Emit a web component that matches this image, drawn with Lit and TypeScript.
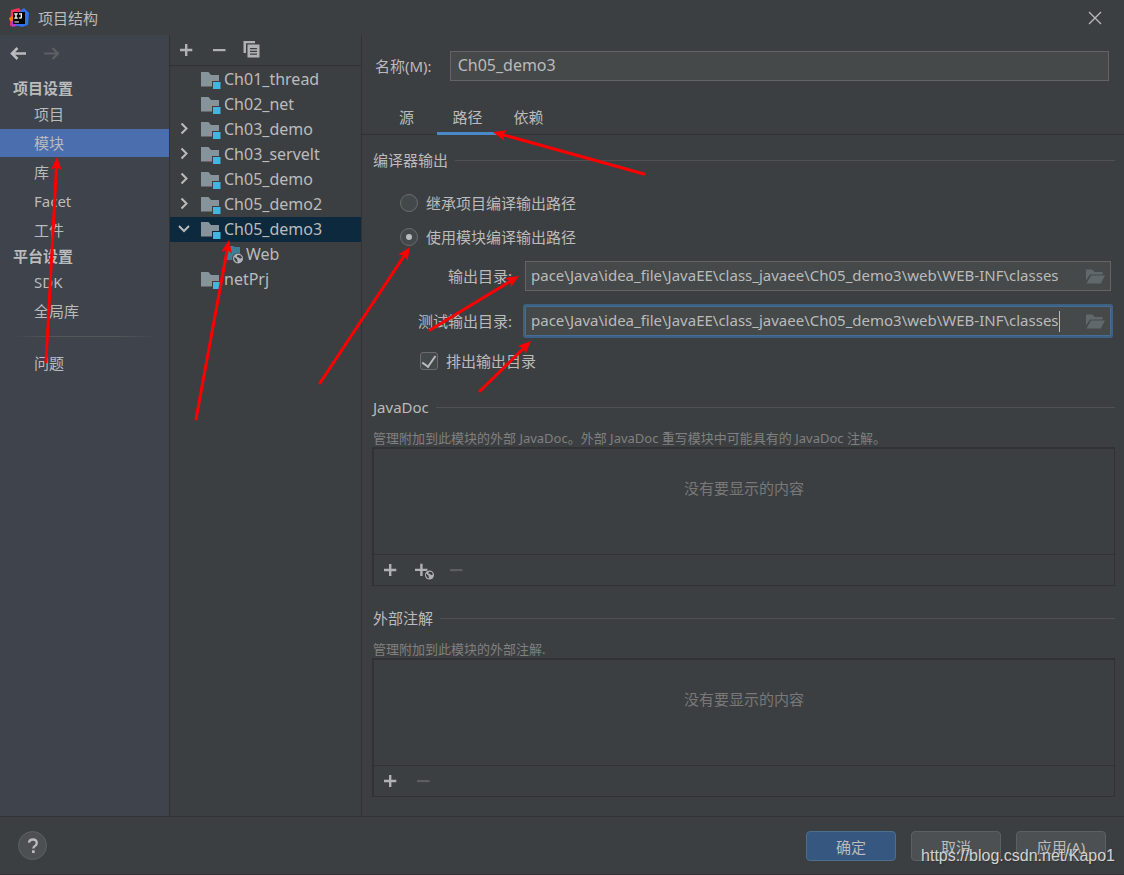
import { LitElement, html, css, svg, nothing } from "lit";
import { customElement, property, state } from "lit/decorators.js";

const icons = {
  plus: svg`<path d="M7 4h2.400v4.800h4.900v2.400H9.400V16H7v-4.800H2V8.800h5z"/>`,
  minus: svg`<path d="M2 9h12.500v2.200H2z"/>`,
  copy: svg`<path d="M-0.500 1H11v2.300H2V13h-2.500z"/><path fill-rule="evenodd" d="M3.500 4.500h12V17.500h-12zM6 8v1.300h7V8zm0 2.700V12h7v-1.300zm0 2.700v1.300h7v-1.300z"/>`,
  back: svg`<path d="M18 9.500H4M9.500 4 4 9.500l5.500 5.500" fill="none" stroke="currentColor" stroke-width="2.600"/>`,
  forward: svg`<path d="M2 9.500h14M10.500 4 16 9.500l-5.500 5.500" fill="none" stroke="currentColor" stroke-width="2.200"/>`,
  right: svg`<path d="M6.500 4.500 11.500 9.500 6.500 14.500" fill="none" stroke="currentColor" stroke-width="2"/>`,
  down: svg`<path d="M4 7 9 12 14 7" fill="none" stroke="currentColor" stroke-width="2"/>`,
  folder: svg`<path fill="#87939a" d="M0 3h7.500l2.500 3h8v6h-7V17.500H0z"/><path fill="#40b6e0" d="M12 13h7.500v7H12z"/>`,
  web: svg`<path fill="#3d7f99" d="M0 2h7l2 1h5v7H9v6H0z"/><circle cx="12" cy="14.500" r="5.800" fill="#3c3f41"/><circle cx="12" cy="14.500" r="5" fill="#afb5b9"/><path fill="#3c3f41" d="M8.500 13l2.500 2 .8 3.300-1.700-.5-2-2.600zM11.500 11l3 .3 1.600 2.400-2.200 1.100-1.100-1.400-2.100-.4z"/>`,
  open: svg`<path d="M1 3.500H7.500l2 2.500H17.500V8.500H5L1 14.500z"/><path d="M6 9.500h14l-4.200 8H1.500z"/>`,
  close: svg`<path d="M4 4l12 12M16 4 4 16" fill="none" stroke="currentColor" stroke-width="1.300"/>`,
  plusWeb: svg`<path d="M5.200 3.800h2.400v4.900h4.900v2.300H7.600v5H5.200v-5H0V8.700h5.200z"/><circle cx="14.500" cy="15" r="5.300" fill="#3c3f41"/><circle cx="14.500" cy="15" r="4.500"/><path fill="#3c3f41" d="M11 13.500l2.500 2 .6 3-1.500-.5-1.600-2.200zM14 11.800l2.700.3 1.400 2.200-2 1-1-1.300-1.900-.4z"/>`,
  logo: svg`<path fill="#fe315d" d="M2 2 10 0l3 4-4 12-8 2z"/><path fill="#f97a12" d="M0 10l4-2 3 6-6-1z"/><path fill="#b53bd0" d="M2 13l7-2 3 6-9 2z"/><path fill="#3170ee" d="M11 3 15 0l5 5-1 12-6 2-7-2z"/><path fill="#000" d="M4 4h12v12H4z"/><path fill="#fff" d="M5.200 5.300h3.600v1.200H7.700v3h1.100v1.200H5.200V9.500h1.100v-3H5.200zM10 5.300h3v4q0 1.500-1.700 1.500-1.200 0-1.800-.7l.8-.9q.4.400.8.400.6 0 .6-.8V6.500H10zM5.500 13.500h4.500v1H5.500z"/>`,
  help: svg`<path d="M6 6.700Q6.400 3.500 10 3.500T13.800 7q0 1.600-1.600 2.700Q10.400 10.800 10.300 12.500" fill="none" stroke="currentColor" stroke-width="2.300"/><path d="M9 14.300h2.700V17H9z"/>`,
};

type IconName = keyof typeof icons;

@customElement("ide-icon")
class IdeIcon extends LitElement {
  @property() name: IconName = "plus";

  static styles = css`
    :host { display: block; flex: none; width: 20px; height: 20px; }
    svg { display: block; width: 20px; height: 20px; fill: currentColor; overflow: visible; }
  `;

  render() {
    return html`<svg viewBox="0 0 20 20" aria-hidden="true">${icons[this.name]}</svg>`;
  }
}

interface Node { name: string; kind?: "closed" | "open"; child?: boolean; }

const nodes: Node[] = [
  { name: "Ch01_thread" },
  { name: "Ch02_net" },
  { name: "Ch03_demo", kind: "closed" },
  { name: "Ch03_servelt", kind: "closed" },
  { name: "Ch05_demo", kind: "closed" },
  { name: "Ch05_demo2", kind: "closed" },
  { name: "Ch05_demo3", kind: "open" },
  { name: "Web", child: true },
  { name: "netPrj" },
];

const outputPath = "pace\\Java\\idea_file\\JavaEE\\class_javaee\\Ch05_demo3\\web\\WEB-INF\\classes";

const arrows = [
  [46, 362, 57, 157],
  [196, 419, 229, 240],
  [320, 383, 410, 247],
  [430, 330, 519, 276],
  [480, 391, 531, 341],
  [644, 174, 493, 132],
];

@customElement("app-root")
class AppRoot extends LitElement {
  @state() page = "模块";
  @state() module = "Ch05_demo3";
  @state() tab = "路径";

  static styles = css`
    :host {
      display: flex; flex-direction: column; position: relative;
      min-height: 100vh; box-sizing: border-box; overflow: hidden;
      background: #3c3f41; color: #bbbbbb;
      border-bottom: 1px solid #323232;
      font: 15px/20px "Noto Sans", "Noto Sans CJK SC", sans-serif;
    }
    * { box-sizing: border-box; }
    button, input { font: inherit; color: inherit; margin: 0; }
    button { border: 0; background: none; padding: 0; text-align: left; }
    .title { display: flex; align-items: center; gap: 9px; height: 35px; padding: 0 19px 0 9px; }
    .title h1 { flex: 1; margin: 0; font-size: 15px; font-weight: 400; }
    .body { display: flex; flex: 1; }
    .side { width: 170px; background: #3e434c; border-right: 1px solid #323232; }
    .history { display: flex; gap: 14px; padding: 8px 8px 12px; height: 42px; }
    .dim { color: #5c6063; }
    .group { margin: 0; padding-left: 13px; font-size: 15px; line-height: 23px; font-weight: 700; }
    .item { display: block; width: 100%; height: 28px; margin-bottom: 1px; padding: 0 0 1px 34px; }
    .item.on { background: #4b6eaf; }
    .rule { height: 1px; margin: 11px 10px 12px; background: linear-gradient(90deg, transparent, #55575a 30%, #55575a 70%, transparent); }
    .tree { width: 192px; border-right: 1px solid #323232; }
    .tools { display: flex; align-items: center; gap: 13px; height: 31px; padding-left: 8px; border-bottom: 1px solid #323232; margin-bottom: 1px; }
    .tools ide-icon, .panel-tools ide-icon { color: #afb1b3; }
    .node { display: flex; align-items: center; width: 100%; height: 25px; padding: 0 0 1px 5px; font-size: 16px; }
    .node.on { background: #0d293e; }
    .node .twist { width: 20px; margin-right: 6px; }
    .node .pic { margin-right: 3px; }
    .node.child { padding-left: 30px; }
    .node.child .pic { margin-right: 0; }
    .main { flex: 1; min-width: 0; }
    .name { display: flex; align-items: center; padding: 16px 15px 0 13px; gap: 18px; }
    .box { display: flex; flex: 1; align-items: center; min-width: 0; height: 30px; background: #45494a; border: 1px solid #646464; padding: 0 5px; }
    .box input { flex: 1; min-width: 0; height: 28px; padding: 0 0 2px; border: 0; background: none; outline: 0; }
    .name .box { padding: 0 7px; }
    .name .box input { font-size: 16px; }
    .box .path { flex: 0 1 auto; field-sizing: content; }
    .box.focus { border-color: #466d94; box-shadow: 0 0 0 2px #3d6185; border-radius: 1px; }
    .caret { width: 1px; height: 21px; }
    .focus .caret { background: #bbbbbb; }
    .browse { color: #60686c; margin-left: auto; }
    .tabs { display: flex; height: 54px; padding: 19px 0 0 14px; border-bottom: 1px solid #323232; }
    .tab { width: 61px; text-align: center; padding: 2px 0 3px; height: 35px; }
    .tab.on { border-bottom: 3px solid #4a88c7; padding-bottom: 0; }
    .content { padding: 14px 9px 0 11px; }
    .legend { display: flex; align-items: center; gap: 7px; margin: 0; font-size: 15px; font-weight: 400; line-height: 22px; }
    .legend::after { content: ""; flex: 1; height: 1px; background: #515151; }
    .options { padding: 15px 4px 18px 27px; }
    .choice { display: flex; align-items: center; gap: 8px; height: 34px; }
    .choice input { appearance: none; width: 18px; height: 18px; border: 1px solid #6b6b6b; background: #43494a; display: grid; place-items: center; }
    .choice input[type="radio"] { border-radius: 50%; }
    .choice input[type="radio"]:checked::after { content: ""; width: 6px; height: 6px; border-radius: 50%; background: #bbbbbb; }
    .choice input[type="checkbox"] { border-radius: 3px; }
    .choice input[type="checkbox"]:checked::after { content: ""; width: 6px; height: 12px; border: solid #bbbbbb; border-width: 0 2px 2px 0; transform: rotate(35deg); margin-bottom: 3px; }
    .fields { display: grid; grid-template-columns: auto 1fr; align-items: center; gap: 15px 13px; padding: 7px 0 8px 18px; }
    .fields label { text-align: right; }
    .exclude { margin-left: 20px; }
    .note { margin: 11px 0 0; font-size: 13px; line-height: 18px; color: #808080; }
    .panel { border: 1px solid #323232; border-left-width: 2px; border-top-width: 2px; margin: 0 0 21px -1px; }
    .panel:last-child { margin-bottom: 16px; }
    .empty { height: 105px; padding-top: 29px; text-align: center; color: #787878; }
    .panel-tools { display: flex; gap: 13px; align-items: center; height: 31px; padding-left: 8px; border-top: 1px solid #323232; }
    .panel-tools .dim ide-icon { color: #5c5e60; }
    .foot { display: flex; align-items: center; gap: 15px; height: 58px; padding: 0 18px; border-top: 1px solid #323232; }
    .help { display: grid; place-items: center; width: 29px; height: 29px; border: 1px solid #5e6060; border-radius: 50%; background: #4c5052; margin-right: auto; }
    .push { width: 90px; height: 30px; padding-top: 2px; border: 1px solid #5e6060; border-radius: 4px; background: #4c5052; text-align: center; }
    .push.primary { background: #365880; border-color: #4c708c; }
    .mark { position: absolute; right: 9px; bottom: 8px; font: 16px/20px "Liberation Sans", sans-serif; color: #d2d3d3; text-shadow: 1px 1px 1px #333; pointer-events: none; }
    .arrows { position: absolute; left: 0; top: 0; width: 700px; height: 450px; pointer-events: none; }
  `;

  navItem(label: string) {
    return html`<button class="item ${this.page === label ? "on" : ""}" @click=${() => (this.page = label)}>${label}</button>`;
  }

  node(n: Node) {
    return html`<button class="node ${this.module === n.name ? "on" : ""} ${n.child ? "child" : ""}" @click=${() => (this.module = n.name)}>
      <span class="twist">${n.kind ? html`<ide-icon name=${n.kind === "open" ? "down" : "right"}></ide-icon>` : nothing}</span>
      <ide-icon class="pic" name=${n.child ? "web" : "folder"}></ide-icon>${n.name}
    </button>`;
  }

  pathField(id: string, label: string, focus: boolean) {
    return html`<label for=${id}>${label}</label>
      <div class="box ${focus ? "focus" : ""}">
        <input class="path" id=${id} .value=${outputPath} spellcheck="false">
        <span class="caret"></span>
        <button class="browse" aria-label="浏览"><ide-icon name="open"></ide-icon></button>
      </div>`;
  }

  arrow([x1, y1, x2, y2]: number[]) {
    const len = Math.hypot(x2 - x1, y2 - y1);
    const bx = x2 - ((x2 - x1) / len) * 9;
    const by = y2 - ((y2 - y1) / len) * 9;
    return svg`<line x1=${x1} y1=${y1} x2=${bx} y2=${by} stroke="#ff0000" stroke-width="3" stroke-linecap="round" marker-end="url(#head)"/>`;
  }

  render() {
    return html`
      <header class="title">
        <ide-icon name="logo"></ide-icon>
        <h1>项目结构</h1>
        <button aria-label="关闭"><ide-icon name="close"></ide-icon></button>
      </header>
      <div class="body">
        <nav class="side">
          <div class="history">
            <button aria-label="后退"><ide-icon name="back"></ide-icon></button>
            <button class="dim" aria-label="前进"><ide-icon name="forward"></ide-icon></button>
          </div>
          <h2 class="group">项目设置</h2>
          ${["项目", "模块", "库", "Facet", "工件"].map((l) => this.navItem(l))}
          <h2 class="group">平台设置</h2>
          ${["SDK", "全局库"].map((l) => this.navItem(l))}
          <div class="rule"></div>
          ${this.navItem("问题")}
        </nav>
        <section class="tree">
          <div class="tools">
            <button aria-label="添加"><ide-icon name="plus"></ide-icon></button>
            <button aria-label="移除"><ide-icon name="minus"></ide-icon></button>
            <button aria-label="复制"><ide-icon name="copy"></ide-icon></button>
          </div>
          ${nodes.map((n) => this.node(n))}
        </section>
        <main class="main">
          <div class="name">
            <label for="name">名称(M):</label>
            <div class="box"><input id="name" .value=${"Ch05_demo3"} spellcheck="false"></div>
          </div>
          <div class="tabs">
            ${["源", "路径", "依赖"].map((t) => html`<button class="tab ${this.tab === t ? "on" : ""}" @click=${() => (this.tab = t)}>${t}</button>`)}
          </div>
          <div class="content">
            <h2 class="legend">编译器输出</h2>
            <div class="options">
              <label class="choice"><input type="radio" name="out">继承项目编译输出路径</label>
              <label class="choice"><input type="radio" name="out" checked>使用模块编译输出路径</label>
              <div class="fields">
                ${this.pathField("out", "输出目录:", false)}
                ${this.pathField("test", "测试输出目录:", true)}
              </div>
              <label class="choice exclude"><input type="checkbox" checked>排出输出目录</label>
            </div>
            <h2 class="legend">JavaDoc</h2>
            <p class="note">管理附加到此模块的外部 JavaDoc。外部 JavaDoc 重写模块中可能具有的 JavaDoc 注解。</p>
            <div class="panel">
              <div class="empty">没有要显示的内容</div>
              <div class="panel-tools">
                <button aria-label="添加"><ide-icon name="plus"></ide-icon></button>
                <button aria-label="添加网址"><ide-icon name="plusWeb"></ide-icon></button>
                <button class="dim" aria-label="移除"><ide-icon name="minus"></ide-icon></button>
              </div>
            </div>
            <h2 class="legend">外部注解</h2>
            <p class="note">管理附加到此模块的外部注解.</p>
            <div class="panel">
              <div class="empty">没有要显示的内容</div>
              <div class="panel-tools">
                <button aria-label="添加"><ide-icon name="plus"></ide-icon></button>
                <button class="dim" aria-label="移除"><ide-icon name="minus"></ide-icon></button>
              </div>
            </div>
          </div>
        </main>
      </div>
      <footer class="foot">
        <button class="help" aria-label="帮助"><ide-icon name="help"></ide-icon></button>
        <button class="push primary">确定</button>
        <button class="push">取消</button>
        <button class="push">应用(A)</button>
      </footer>
      <svg class="arrows" viewBox="0 0 700 450" aria-hidden="true">
        <defs>
          <marker id="head" markerUnits="userSpaceOnUse" markerWidth="14" markerHeight="12" refX="4" refY="6" orient="auto">
            <path d="M0 0.500 13 6 0 11.500 3 6z" fill="#ff0000"/>
          </marker>
        </defs>
        ${arrows.map((a) => this.arrow(a))}
      </svg>
      <div class="mark">https://blog.csdn.net/Kapo1</div>
    `;
  }
}
